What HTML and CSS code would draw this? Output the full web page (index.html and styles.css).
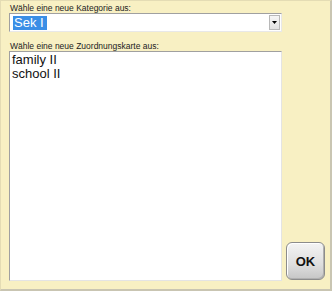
FILE: index.html
```html
<!DOCTYPE html>
<html lang="de">

<head>
    <meta charset="utf-8" />
    <title>Zuordnungskarte</title>
    <link rel="stylesheet" href="styles.css">
</head>

<body>
    <div class="dialog">
        <label class="caption">Wähle eine neue Kategorie aus:</label>
        <div class="combo">
            <div class="comboText"><span class="selected">Sek I</span></div>
            <div class="comboButton">
                <svg width="5" height="3" viewBox="0 0 5 3"><path d="M0 0h5L2.5 3z" fill="#000"/></svg>
            </div>
        </div>
        <label class="caption second">Wähle eine neue Zuordnungskarte aus:</label>
        <div class="bottomRow">
            <ul class="cardList">
                <li>family II</li>
                <li>school II</li>
            </ul>
            <button class="okButton">OK</button>
        </div>
    </div>
</body>

</html>
```

FILE: styles.css
```css
html,
body {
    margin: 0;
    padding: 0;
}

.dialog {
    box-sizing: border-box;
    width: 332px;
    height: 291px;
    background-color: #f8f0c3;
    border-top: 1px solid #e4dcb4;
    border-left: 1px solid #e4dcb4;
    border-right: 2px solid #c9c5b2;
    border-bottom: 2px solid #c9c5b2;
    padding: 2px 5px 8px 8px;
    display: flex;
    flex-direction: column;
    font-family: "Liberation Sans", Arial, sans-serif;
}

.caption {
    display: block;
    font-size: 8.5px;
    line-height: 10px;
    color: #222;
    padding-left: 1px;
}

.second {
    margin-top: 9px;
}

.combo {
    box-sizing: border-box;
    width: 273px;
    height: 19px;
    display: flex;
    background: #fff;
    border-top: 1px solid #a0a0a0;
    border-left: 1px solid #a0a0a0;
    border-right: 1px solid #e8e8e8;
    border-bottom: 1px solid #e8e8e8;
    padding: 1px;
}

.comboText {
    flex: 1;
    padding-left: 2px;
    display: flex;
    align-items: center;
}

.selected {
    background-color: #3a8ee6;
    color: #fff;
    font-size: 13px;
    line-height: 14px;
    padding: 0 3px 0 1px;
}

.comboButton {
    box-sizing: border-box;
    width: 11px;
    display: flex;
    align-items: center;
    justify-content: center;
    background: linear-gradient(#f6f6f6, #e2e2e2);
    border: 1px solid #b8b8b8;
}

.bottomRow {
    flex: 1;
    display: flex;
    align-items: flex-end;
    gap: 4px;
}

.cardList {
    box-sizing: border-box;
    list-style: none;
    margin: 0;
    width: 273px;
    height: 230px;
    padding: 1px 2px;
    background: #fff;
    border-top: 1px solid #a0a0a0;
    border-left: 1px solid #a0a0a0;
    border-right: 1px solid #e4e4e4;
    border-bottom: 1px solid #e4e4e4;
}

.cardList li {
    font-size: 13px;
    line-height: 14px;
    color: #111;
}

.okButton {
    box-sizing: border-box;
    width: 39px;
    height: 38px;
    margin-bottom: 1px;
    border: 1px solid #8c8c8c;
    border-radius: 6px;
    background: linear-gradient(#f4f4f4, #dedede 60%, #c6c6c6);
    box-shadow: inset 1px 1px 0 #fff, inset -1px -1px 0 #b0b0b0;
    font-family: "Liberation Sans", Arial, sans-serif;
    font-weight: bold;
    font-size: 13px;
    color: #111;
    padding: 0;
}
```
